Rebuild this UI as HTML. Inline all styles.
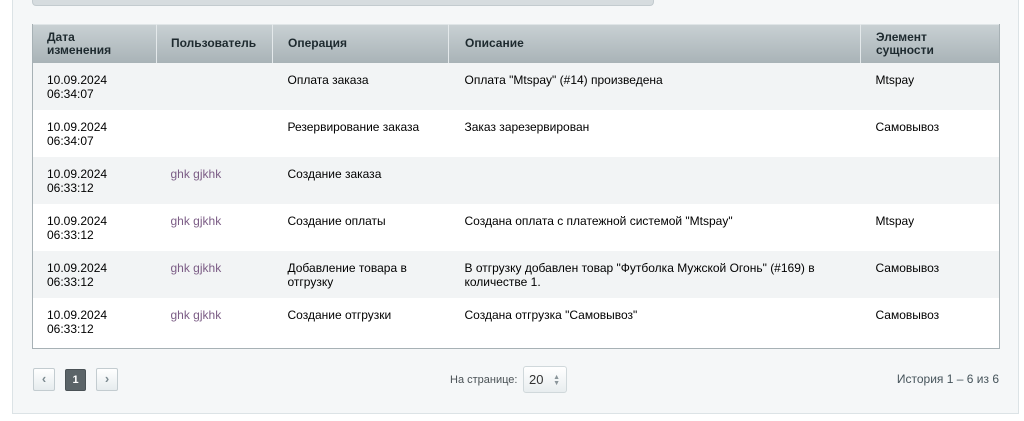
<!DOCTYPE html><html><head><meta charset="utf-8"><style>
body{margin:0;width:1024px;height:421px;background:#fff;font-family:"Liberation Sans",Arial,sans-serif;font-size:12px;color:#000;position:relative;overflow:hidden}
.panel{position:absolute;left:12px;top:-2px;width:1005px;height:414px;background:#f5f7f8;border:1px solid #dce3e6}
.topbar{position:absolute;left:32px;top:0;width:620px;height:5px;background:#d6dcdf;border:1px solid #c3cbcf;border-top:none;border-radius:0 0 4px 4px}
table{position:absolute;left:32px;top:24px;width:968px;border-collapse:collapse;border:1px solid #a7b1b5;border-top:none;table-layout:fixed}
th{height:39px;background:linear-gradient(#c9d1d4,#a9b3b7);text-align:left;font-weight:bold;color:#1e2a2f;padding:0 0 0 14px;font-size:12px;line-height:13px;border-left:1px solid #e4e9eb;box-shadow:inset 0 1px 0 #dfe5e7}
th:first-child{border-left:none}
td{height:47px;vertical-align:top;padding:10px 0 0 14px;box-sizing:border-box;line-height:14px;color:#000}
th:nth-child(n+3),td:nth-child(n+3){padding-left:15px}
th:nth-child(4),td:nth-child(4){padding-left:16px}
tr.g td{background:#f2f4f5}tr.w td{background:#fff}
.u{color:#7b5c85}
.btn{position:absolute;top:368px;width:22px;height:23px;box-sizing:border-box;border:1px solid #c3ccd0;border-radius:2px;background:linear-gradient(#fff,#e6ecee);color:#7d8b91;text-align:center;line-height:20px;font-size:13px;font-weight:bold}
</style></head><body>
<div class="panel"></div><div class="topbar"></div>
<table>
<colgroup><col style="width:124px"><col style="width:116px"><col style="width:176px"><col style="width:412px"><col></colgroup>
<tr><th>Дата<br>изменения</th><th>Пользователь</th><th>Операция</th><th>Описание</th><th>Элемент<br>сущности</th></tr>
<tr class="g"><td>10.09.2024<br>06:34:07</td><td></td><td>Оплата заказа</td><td>Оплата "Mtspay" (#14) произведена</td><td>Mtspay</td></tr>
<tr class="w"><td>10.09.2024<br>06:34:07</td><td></td><td>Резервирование заказа</td><td>Заказ зарезервирован</td><td>Самовывоз</td></tr>
<tr class="g"><td>10.09.2024<br>06:33:12</td><td class="u">ghk gjkhk</td><td>Создание заказа</td><td></td><td></td></tr>
<tr class="w"><td>10.09.2024<br>06:33:12</td><td class="u">ghk gjkhk</td><td>Создание оплаты</td><td>Создана оплата с платежной системой "Mtspay"</td><td>Mtspay</td></tr>
<tr class="g"><td>10.09.2024<br>06:33:12</td><td class="u">ghk gjkhk</td><td>Добавление товара в<br>отгрузку</td><td>В отгрузку добавлен товар "Футболка Мужской Огонь" (#169) в<br>количестве 1.</td><td>Самовывоз</td></tr>
<tr class="w"><td style="height:50px">10.09.2024<br>06:33:12</td><td class="u">ghk gjkhk</td><td>Создание отгрузки</td><td>Создана отгрузка "Самовывоз"</td><td>Самовывоз</td></tr>
</table>
<div class="btn" style="left:33px">‹</div>
<div class="btn" style="left:65px;top:369px;width:21px;height:22px;background:#5b6468;border-color:#4a5256;color:#fff;line-height:20px;font-size:11px">1</div>
<div class="btn" style="left:96px">›</div>
<div style="position:absolute;left:450px;top:374px;font-size:11px;color:#4a5256">На странице:</div>
<div style="position:absolute;left:523px;top:366px;width:44px;height:27px;box-sizing:border-box;border:1px solid #d0d8db;border-radius:3px;background:linear-gradient(#fff,#e8edef);font-size:13px;line-height:25px;padding-left:5px;color:#333">20<span style="position:absolute;right:6px;font-size:7px;color:#8a959a;line-height:6px;top:8px">▲<br>▼</span></div>
<div style="position:absolute;right:25px;top:372px;font-size:12px;color:#46545b">История 1 – 6 из 6</div>
</body></html>
